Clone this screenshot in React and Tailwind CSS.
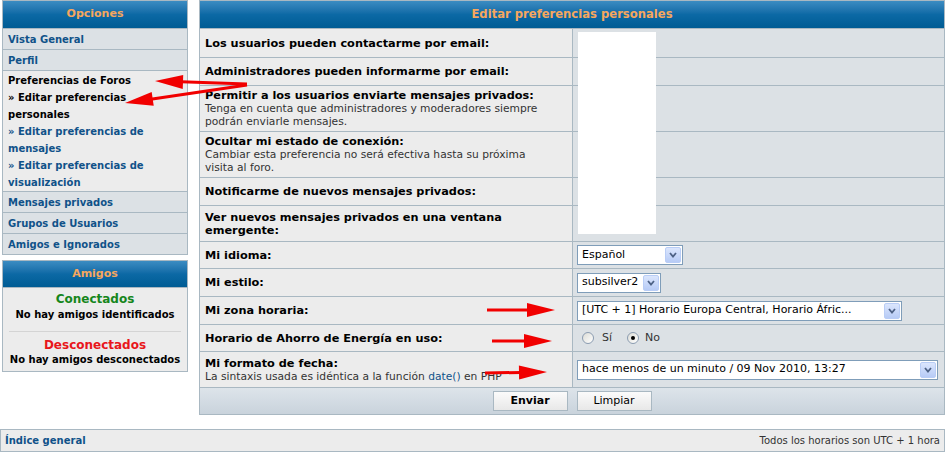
import React from 'react'

const FONT = "font-['DejaVu_Sans',Verdana,sans-serif]"

function Chevron() {
  return (
    <svg width="8" height="6" viewBox="0 0 8 6">
      <path d="M1 1 L4 4.5 L7 1" fill="none" stroke="#4d6185" strokeWidth="1.8" />
    </svg>
  )
}

function Select({ className, value }) {
  return (
    <div className={`flex h-[20px] items-center border border-[#7f9db9] bg-white ${className}`}>
      <span className="flex-1 truncate pl-[4px] text-[11px] text-black">{value}</span>
      <span className="mr-px flex h-[16px] w-[16px] items-center justify-center rounded-[2px] border border-[#b9cdf6] bg-gradient-to-b from-[#dbe6fd] to-[#b7cbf6]">
        <Chevron />
      </span>
    </div>
  )
}

function Radio({ checked }) {
  return (
    <span className="flex h-[12px] w-[12px] items-center justify-center rounded-full border border-[#8b9cb1] bg-gradient-to-br from-[#dcdcd6] to-white">
      {checked && <span className="h-[4px] w-[4px] rounded-full bg-black" />}
    </span>
  )
}

const rows = [
  { label: 'Los usuarios pueden contactarme por email:', h: 'h-[28px]' },
  { label: 'Administradores pueden informarme por email:', h: 'h-[27px]' },
  {
    label: 'Permitir a los usuarios enviarte mensajes privados:',
    desc: 'Tenga en cuenta que administradores y moderadores siempre podrán enviarle mensajes.',
    h: 'h-[45px]',
  },
  {
    label: 'Ocultar mi estado de conexión:',
    desc: 'Cambiar esta preferencia no será efectiva hasta su próxima visita al foro.',
    h: 'h-[45px]',
  },
  { label: 'Notificarme de nuevos mensajes privados:', h: 'h-[27px]' },
  { label: 'Ver nuevos mensajes privados en una ventana emergente:', h: 'h-[35px]' },
  { label: 'Mi idioma:', h: 'h-[26px]', value: <Select className="w-[106px]" value="Español" /> },
  { label: 'Mi estilo:', h: 'h-[27px]', value: <Select className="w-[84px]" value="subsilver2" /> },
  {
    label: 'Mi zona horaria:',
    h: 'h-[27px]',
    value: <Select className="w-[325px]" value="[UTC + 1] Horario Europa Central, Horario Áfric..." />,
  },
  {
    label: 'Horario de Ahorro de Energía en uso:',
    h: 'h-[26px]',
    value: (
      <div className="flex items-center pl-[5px] text-[11px] text-[#333]">
        <Radio />
        <span className="ml-[8px]">Sí</span>
        <span className="ml-[15px]"><Radio checked /></span>
        <span className="ml-[6px]">No</span>
      </div>
    ),
  },
  {
    label: 'Mi formato de fecha:',
    desc: (
      <>
        La sintaxis usada es idéntica a la función <span className="text-[#105289]">date()</span> en PHP
      </>
    ),
    h: 'h-[35px]',
    value: <Select className="w-[361px]" value="hace menos de un minuto / 09 Nov 2010, 13:27" />,
  },
]

function arrow(x1, y1, x2, y2, head = 28, half = 7) {
  const dx = x2 - x1
  const dy = y2 - y1
  const len = Math.hypot(dx, dy)
  const ux = dx / len
  const uy = dy / len
  const bx = x2 - ux * head
  const by = y2 - uy * head
  const px = -uy * half
  const py = ux * half
  return {
    line: [x1, y1, bx + ux * 2, by + uy * 2],
    head: `${x2},${y2} ${bx + px},${by + py} ${bx - px},${by - py}`,
  }
}

const arrows = [
  arrow(247, 84, 155, 81),
  arrow(247, 85, 125, 103),
  arrow(487, 310, 555, 310),
  arrow(492, 341, 552, 341),
  arrow(485, 373, 547, 372),
]

const headerCls =
  'flex items-center justify-center bg-gradient-to-b from-[#3b8cc2] via-[#0c69a5] to-[#005c94] font-bold text-[#f6a75e]'

function SideLink({ children }) {
  return (
    <div className="flex h-[20px] items-center bg-[#dce1e5] px-[5px] text-[10px] font-bold text-[#105289]">
      {children}
    </div>
  )
}

export default function App() {
  return (
    <div className={`relative h-[453px] w-[950px] overflow-hidden bg-white ${FONT}`}>
      <div className="flex items-start">
        <aside className="ml-[2px] flex w-[186px] flex-col">
          <div className="flex flex-col gap-px bg-[#a9b8c2] p-px">
            <div className={`h-[27px] text-[11px] ${headerCls}`}>Opciones</div>
            <SideLink>Vista General</SideLink>
            <SideLink>Perfil</SideLink>
            <div className="flex h-[120px] flex-col bg-[#ececec] px-[5px] pt-[1px] text-[10px] font-bold leading-[17px]">
              <span className="text-black">Preferencias de Foros</span>
              <span className="text-black">» Editar preferencias personales</span>
              <span className="text-[#105289]">» Editar preferencias de mensajes</span>
              <span className="text-[#105289]">» Editar preferencias de visualización</span>
            </div>
            <SideLink>Mensajes privados</SideLink>
            <SideLink>Grupos de Usuarios</SideLink>
            <SideLink>Amigos e Ignorados</SideLink>
          </div>

          <div className="mt-[5px] flex flex-col gap-px bg-[#a9b8c2] p-px">
            <div className={`h-[26px] text-[11px] ${headerCls}`}>Amigos</div>
            <div className="flex h-[83px] flex-col items-center bg-[#ececec] text-center font-bold">
              <span className="mt-[3px] text-[12px] leading-[16px] text-[#16861b]">Conectados</span>
              <span className="text-[10px] leading-[16px] text-black">No hay amigos identificados</span>
              <div className="mx-[6px] mt-[8px] h-px self-stretch bg-[#d4d4d4]" />
              <span className="mt-[5px] text-[12px] leading-[16px] text-[#e8161b]">Desconectados</span>
              <span className="text-[10px] leading-[14px] text-black">No hay amigos desconectados</span>
            </div>
          </div>
        </aside>

        <main className="relative ml-[11px] grid w-[746px] grid-cols-[372px_371px] gap-px bg-[#a9b8c2] p-px">
          <div className={`col-span-2 h-[27px] text-[11.6px] ${headerCls}`}>Editar preferencias personales</div>
          {rows.map((r, i) => (
            <React.Fragment key={i}>
              <div className={`${r.h} flex flex-col justify-center bg-[#ececec] px-[5px]`}>
                <span className="text-[11.3px] font-bold leading-[13px] text-black">{r.label}</span>
                {r.desc && <span className="max-w-[352px] text-[10.7px] leading-[13px] text-[#333]">{r.desc}</span>}
              </div>
              <div className="flex items-center bg-[#dce1e5] px-[4px]">{r.value}</div>
            </React.Fragment>
          ))}
          <div className="col-span-2 flex h-[26px] items-center justify-center gap-[9px] bg-gradient-to-b from-[#dde4ea] to-[#c9d3dc]">
            <button className="h-[20px] w-[75px] border border-[#a9b8c2] bg-gradient-to-b from-[#fbfbfb] to-[#e8e8e8] text-[11px] font-bold text-black">
              Enviar
            </button>
            <button className="h-[20px] w-[75px] border border-[#a9b8c2] bg-gradient-to-b from-[#fbfbfb] to-[#e8e8e8] text-[11px] text-black">
              Limpiar
            </button>
          </div>
          <div className="absolute left-[379px] top-[32px] h-[202px] w-[78px] bg-white" />
        </main>
      </div>

      <footer className="mt-[14px] flex h-[23px] w-[945px] items-center justify-between border border-[#a9b8c2] bg-[#ececec] px-[4px]">
        <span className="text-[10px] font-bold text-[#105289]">Índice general</span>
        <span className="text-[10px] text-[#333]">Todos los horarios son UTC + 1 hora</span>
      </footer>

      <svg className="pointer-events-none absolute left-0 top-0" width="950" height="453">
        {arrows.map((a, i) => (
          <g key={i} fill="#f10000" stroke="#f10000">
            <line x1={a.line[0]} y1={a.line[1]} x2={a.line[2]} y2={a.line[3]} strokeWidth="3" />
            <polygon points={a.head} strokeWidth="0" />
          </g>
        ))}
      </svg>
    </div>
  )
}
